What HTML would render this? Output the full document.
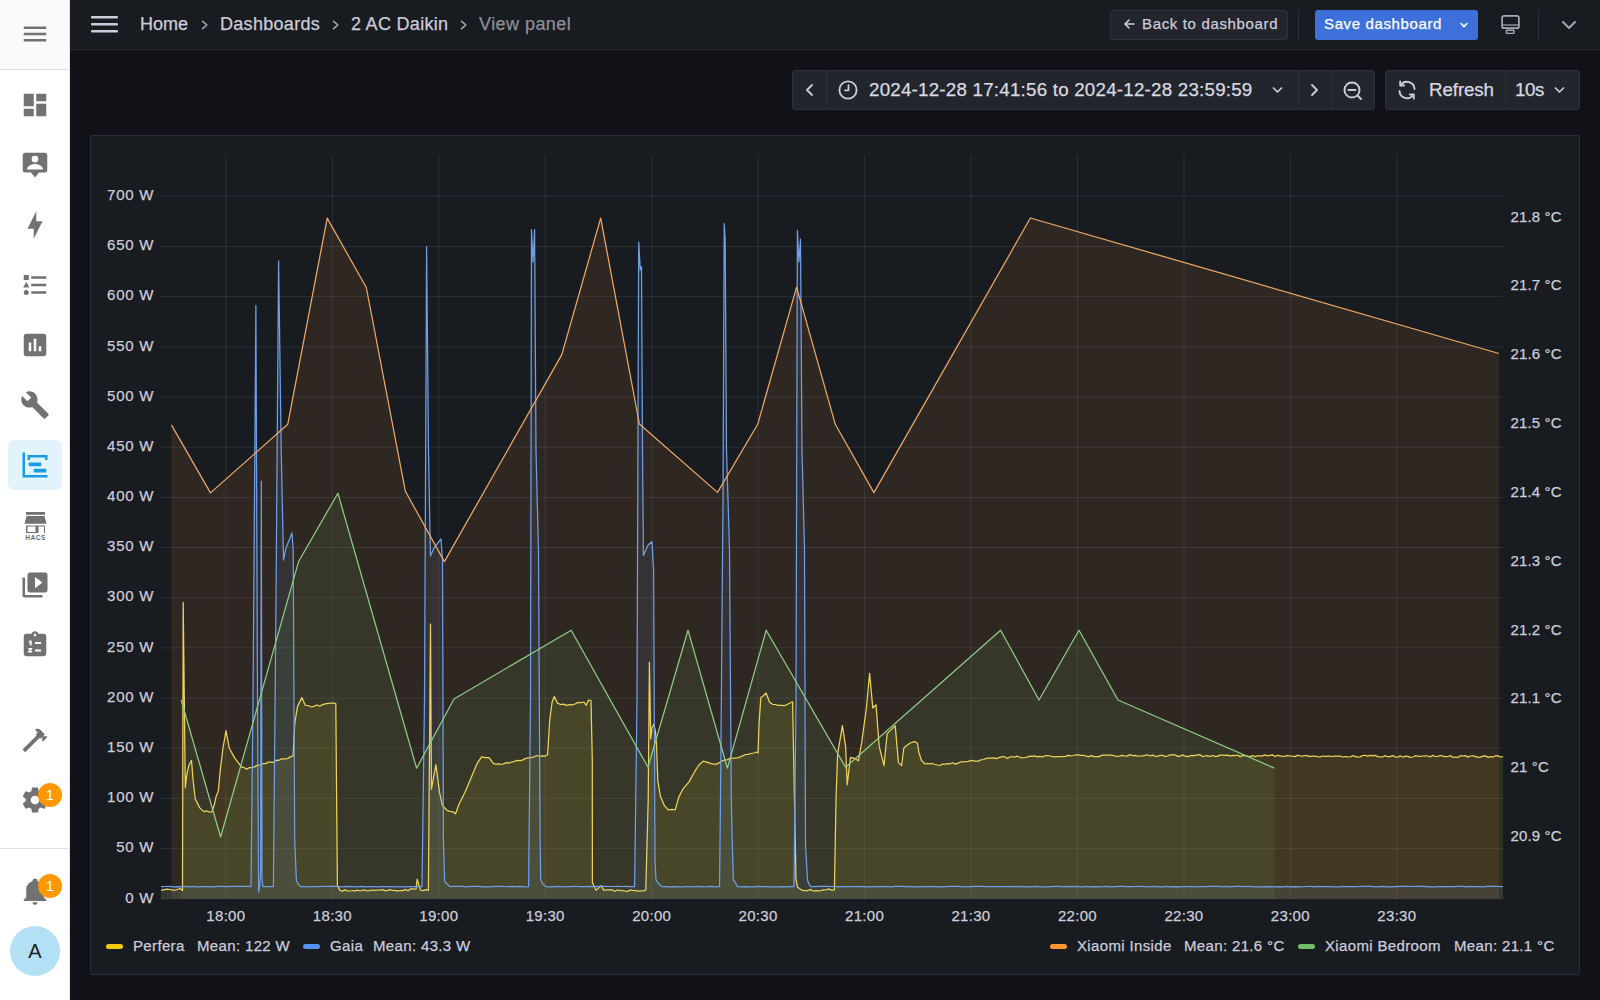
<!DOCTYPE html>
<html><head><meta charset="utf-8">
<style>
*{box-sizing:border-box;margin:0;padding:0}
html,body{width:1600px;height:1000px;overflow:hidden;background:#111217;font-family:"Liberation Sans",sans-serif}
#top div,.ttxt,.yl,.yr,.xl,.lg{-webkit-text-stroke:0.25px currentColor}
#side{position:absolute;left:0;top:0;width:70px;height:1000px;background:#fff;border-right:1px solid #e4e4e4}
#sidehead{position:absolute;left:0;top:0;width:69px;height:70px;background:#fafafa;border-bottom:1px solid #e0e0e0}
.ic{position:absolute;left:20px;width:30px;height:30px}
.ic svg{width:30px;height:30px;display:block}
.ic path{fill:#727272}
#sel{position:absolute;left:8px;top:440px;width:54px;height:50px;border-radius:6px;background:#e3f3fc}
.badge{position:absolute;width:24px;height:24px;border-radius:12px;background:#ff9800;color:#fff;font-size:14px;line-height:24px;text-align:center}
#sep{position:absolute;left:0;top:848px;width:69px;height:1px;background:#e0e0e0}
#avatar{position:absolute;left:10px;top:926px;width:50px;height:50px;border-radius:25px;background:#b3e0f5;color:#212121;font-size:20px;line-height:50px;text-align:center}

#top{position:absolute;left:70px;top:0;width:1530px;height:50px;background:#181b1f;border-bottom:1px solid #2c2e33}
.crumb{position:absolute;top:13px;font-size:18px;color:#ccccdc;white-space:nowrap;line-height:22px}
.chev{position:absolute;top:13px;font-size:16px;color:#9fa0a8;line-height:22px}
.btn{position:absolute;border-radius:3px}

.tb{position:absolute;top:70px;height:40px;background:#22252b;border:1px solid #2f3237}
.tdiv{position:absolute;top:71px;width:1px;height:38px;background:#2c2f35}
.ttxt{position:absolute;top:79px;font-size:18.75px;line-height:22px;color:#d8d9e3;white-space:nowrap}
#panel{position:absolute;left:90px;top:135px;width:1490px;height:840px;background:#181b1f;border:1px solid #2a2d33;border-radius:2px}
.yl{position:absolute;left:70px;width:84.2px;text-align:right;font-size:15px;line-height:18px;color:#ccccdc;letter-spacing:0.75px;white-space:nowrap}
.yr{position:absolute;left:1510.5px;font-size:15px;line-height:18px;color:#ccccdc;letter-spacing:0.15px;white-space:nowrap}
.xl{position:absolute;top:907px;width:60px;text-align:center;font-size:15px;line-height:18px;color:#ccccdc;letter-spacing:0.3px}
.lg{position:absolute;top:937px;font-size:15px;line-height:18px;color:#ccccdc;white-space:nowrap;letter-spacing:0.35px}
.ld{position:absolute;top:944px;width:17px;height:5px;border-radius:3px}
</style></head><body>
<div id="side">
  <div id="sidehead">
    <div class="ic" style="top:19px"><svg viewBox="0 0 24 24"><path d="M3,6H21V8H3V6M3,11H21V13H3V11M3,16H21V18H3V16Z"/></svg></div>
  </div>
  <div id="sel"></div>
  <div class="ic" style="top:89.5px"><svg viewBox="0 0 24 24"><path d="M13,3V9H21V3M13,21H21V11H13M3,21H11V15H3M3,13H11V3H3V13Z"/></svg></div>
  <div class="ic" style="top:149.5px"><svg viewBox="0 0 24 24"><path fill-rule="evenodd" d="M4.2 2.2H19.8A2 2 0 0 1 21.8 4.2V16A2 2 0 0 1 19.8 18H15.2L12 22L8.8 18H4.2A2 2 0 0 1 2.2 16V4.2A2 2 0 0 1 4.2 2.2Z M12 4.5A2.7 2.7 0 1 0 12 9.9A2.7 2.7 0 1 0 12 4.5Z M5.6 15.6H18.4C18.4 13 15 11.2 12 11.2S5.6 13 5.6 15.6Z"/></svg></div>
  <div class="ic" style="top:209.5px"><svg viewBox="0 0 24 24"><path d="M11 15H6L13 1V9H18L11 23V15Z"/></svg></div>
  <div class="ic" style="top:269.5px"><svg viewBox="0 0 24 24"><path d="M5,9.5L7.5,14H2.5L5,9.5M3,4H7V8H3V4M5,20A2,2 0 0,0 7,18A2,2 0 0,0 5,16A2,2 0 0,0 3,18A2,2 0 0,0 5,20M9,5V7H21V5H9M9,19H21V17H9V19M9,13H21V11H9V13Z"/></svg></div>
  <div class="ic" style="top:329.5px"><svg viewBox="0 0 24 24"><path d="M9 17H7V10H9V17M13 17H11V7H13V17M17 17H15V13H17V17M19 3H5C3.9 3 3 3.9 3 5V19C3 20.1 3.9 21 5 21H19C20.1 21 21 20.1 21 19V5C21 3.9 20.1 3 19 3Z" fill-rule="evenodd"/></svg></div>
  <div class="ic" style="top:389.5px"><svg viewBox="0 0 24 24"><path d="M22.7,19L13.6,9.9C14.5,7.6 14,4.9 12.1,3C10.1,1 7.1,0.6 4.7,1.7L9,6L6,9L1.6,4.7C0.4,7.1 0.9,10.1 2.9,12.1C4.8,14 7.5,14.5 9.8,13.6L18.9,22.7C19.3,23.1 19.9,23.1 20.3,22.7L22.6,20.4C23.1,20 23.1,19.3 22.7,19Z"/></svg></div>
  <div class="ic" style="top:449.5px"><svg viewBox="0 0 24 24"><path style="fill:#1a9be6" d="M2,2H4V20H22V22H2V2M7,10H17V13H7V10M11,15H21V18H11V15M6,4H22V8H20V6H8V8H6V4Z"/></svg></div>
  <svg style="position:absolute;left:15px;top:500px" width="40" height="50" viewBox="0 0 40 50"><g fill="#727272"><rect x="11" y="12" width="19" height="2.8"/><path d="M11.5 16H29.5L31.5 23.8H9.5Z"/><path d="M11 25.5H30V33H29V26.5H23.5V33H20.5V26.5H12.5V32H20.5V33H11Z"/></g><text x="20.5" y="40.2" font-size="6.6" font-weight="bold" text-anchor="middle" fill="#6a6a6a" font-family="Liberation Sans" letter-spacing="0.5">HACS</text></svg>
  <div class="ic" style="top:569.5px"><svg viewBox="0 0 24 24"><path d="M4,6H2V20A2,2 0 0,0 4,22H18V20H4V6M20,2H8A2,2 0 0,0 6,4V16A2,2 0 0,0 8,18H20A2,2 0 0,0 22,16V4A2,2 0 0,0 20,2M12,14.5V5.5L18,10L12,14.5Z"/></svg></div>
  <div class="ic" style="top:629.5px"><svg viewBox="0 0 24 24"><path d="M19 3H14.82C14.4 1.84 13.3 1 12 1S9.6 1.84 9.18 3H5C3.9 3 3 3.9 3 5V19C3 20.1 3.9 21 5 21H19C20.1 21 21 20.1 21 19V5C21 3.9 20.1 3 19 3M12 3C12.55 3 13 3.45 13 4S12.55 5 12 5 11 4.55 11 4 11.45 3 12 3M12 9.6H16.8V11.2H12Z M12 15.6H16.8V17.2H12Z M7.8 8.4H9.3V12.2H7.8V9.8L7 10.2V9.1Z M6.6 14.4H9.7V15.6L8.2 16.8H9.8V18H6.4V16.9L8 15.6H6.6Z" fill-rule="evenodd"/></svg></div>
  <div class="ic" style="top:724.5px"><svg viewBox="0 0 24 24"><path d="M2 19.63L13.43 8.2L12.72 7.5L14.14 6.07L12 3.89C13.2 2.7 15.09 2.7 16.27 3.89L19.87 7.5L18.45 8.91H21.29L22 9.62L18.45 13.21L17.74 12.5V9.62L16.27 11.04L15.56 10.33L4.13 21.76L2 19.63Z"/></svg></div>
  <div class="ic" style="top:784.5px"><svg viewBox="0 0 24 24"><path d="M12,15.5A3.5,3.5 0 0,1 8.5,12A3.5,3.5 0 0,1 12,8.5A3.5,3.5 0 0,1 15.5,12A3.5,3.5 0 0,1 12,15.5M19.43,12.97C19.47,12.650 19.5,12.33 19.5,12C19.5,11.67 19.47,11.34 19.43,11L21.54,9.37C21.73,9.22 21.78,8.95 21.66,8.73L19.66,5.27C19.54,5.05 19.27,4.96 19.05,5.05L16.56,6.05C16.04,5.66 15.5,5.32 14.87,5.07L14.5,2.42C14.46,2.18 14.25,2 14,2H10C9.75,2 9.54,2.18 9.5,2.42L9.130,5.07C8.5,5.32 7.96,5.66 7.44,6.05L4.95,5.05C4.73,4.96 4.46,5.05 4.34,5.27L2.34,8.73C2.21,8.95 2.27,9.22 2.46,9.37L4.57,11C4.53,11.34 4.5,11.67 4.5,12C4.5,12.33 4.53,12.65 4.57,12.97L2.46,14.63C2.27,14.78 2.21,15.05 2.34,15.27L4.34,18.73C4.46,18.95 4.73,19.03 4.95,18.95L7.44,17.94C7.96,18.34 8.5,18.68 9.13,18.93L9.5,21.58C9.54,21.82 9.75,22 10,22H14C14.25,22 14.46,21.82 14.5,21.58L14.87,18.93C15.5,18.67 16.04,18.34 16.56,17.94L19.05,18.95C19.27,19.03 19.54,18.95 19.66,18.73L21.66,15.27C21.78,15.05 21.73,14.78 21.54,14.63L19.43,12.97Z"/></svg></div>
  <div class="badge" style="left:38px;top:783px">1</div>
  <div id="sep"></div>
  <div class="ic" style="top:875.5px"><svg viewBox="0 0 24 24"><path d="M21,19V20H3V19L5,17V11C5,7.9 7.03,5.170 10,4.29C10,4.19 10,4.1 10,4A2,2 0 0,1 12,2A2,2 0 0,1 14,4C14,4.1 14,4.19 14,4.29C16.97,5.17 19,7.9 19,11V17L21,19M14,21A2,2 0 0,1 12,23A2,2 0 0,1 10,21"/></svg></div>
  <div class="badge" style="left:38px;top:874px">1</div>
  <div id="avatar">A</div>
</div>

<div id="top">
  <svg style="position:absolute;left:21px;top:14px" width="27" height="20" viewBox="0 0 27 20"><rect x="0" y="2" width="27" height="2.4" rx="1" fill="#ccccdc"/><rect x="0" y="9" width="27" height="2.4" rx="1" fill="#ccccdc"/><rect x="0" y="16" width="27" height="2.4" rx="1" fill="#ccccdc"/></svg>
  <div class="crumb" style="left:70px">Home</div>
  <svg style="position:absolute;left:130px;top:19px" width="10" height="12" viewBox="0 0 10 12"><path d="M2.6 2.3L6.9 6L2.6 9.7" stroke="#a3a4ac" stroke-width="1.6" fill="none" stroke-linecap="round" stroke-linejoin="round"/></svg>
  <div class="crumb" style="left:150px;letter-spacing:0.3px">Dashboards</div>
  <svg style="position:absolute;left:261px;top:19px" width="10" height="12" viewBox="0 0 10 12"><path d="M2.6 2.3L6.9 6L2.6 9.7" stroke="#a3a4ac" stroke-width="1.6" fill="none" stroke-linecap="round" stroke-linejoin="round"/></svg>
  <div class="crumb" style="left:281px;letter-spacing:0.3px">2 AC Daikin</div>
  <svg style="position:absolute;left:389px;top:19px" width="10" height="12" viewBox="0 0 10 12"><path d="M2.6 2.3L6.9 6L2.6 9.7" stroke="#a3a4ac" stroke-width="1.6" fill="none" stroke-linecap="round" stroke-linejoin="round"/></svg>
  <div class="crumb" style="left:409px;color:#8e8e98;letter-spacing:0.45px">View panel</div>

  <div class="btn" style="left:1040px;top:10px;width:178px;height:30px;background:#22252b;border:1px solid #2f3237"></div>
  <svg style="position:absolute;left:1052px;top:17px" width="14" height="14" viewBox="0 0 14 14"><path d="M12 7H3M7 3L3 7L7 11" stroke="#ccccdc" stroke-width="1.6" fill="none" stroke-linecap="round" stroke-linejoin="round"/></svg>
  <div style="position:absolute;left:1072px;top:15px;font-size:15px;line-height:18px;color:#ccccdc;letter-spacing:0.65px;white-space:nowrap">Back to dashboard</div>
  <div style="position:absolute;left:1228px;top:10px;width:1px;height:30px;background:#2c2f35"></div>
  <div class="btn" style="left:1245px;top:10px;width:163px;height:30px;background:#3d71d9"></div>
  <div style="position:absolute;left:1254px;top:15px;font-size:15px;line-height:18px;color:#fff;letter-spacing:0.63px;white-space:nowrap">Save dashboard</div>
  <svg style="position:absolute;left:1388px;top:19px" width="12" height="12" viewBox="0 0 12 12"><path d="M3 4.5L6 7.5L9 4.5" stroke="#fff" stroke-width="1.6" fill="none" stroke-linecap="round"/></svg>
  <svg style="position:absolute;left:1429px;top:13px" width="24" height="24" viewBox="0 0 24 24"><rect x="3.1" y="2.95" width="16.8" height="12.2" rx="2" stroke="#a9aab3" stroke-width="1.7" fill="none"/><path d="M3.1 12H19.9" stroke="#a9aab3" stroke-width="1.2"/><rect x="7.4" y="17.2" width="7.6" height="3.2" rx="0.6" stroke="#a9aab3" stroke-width="1.4" fill="none"/></svg>
  <div style="position:absolute;left:1468px;top:10px;width:1px;height:30px;background:#2c2f35"></div>
  <svg style="position:absolute;left:1490px;top:17px" width="18" height="16" viewBox="0 0 18 16"><path d="M3 5L9 11L15 5" stroke="#a5a6ae" stroke-width="2" fill="none" stroke-linecap="round" stroke-linejoin="round"/></svg>
</div>


<div class="tb" style="left:792px;width:583px;border-radius:3px"></div>
<div class="tdiv" style="left:826px"></div>
<div class="tdiv" style="left:1298px"></div>
<div class="tdiv" style="left:1331px"></div>
<svg style="position:absolute;left:802px;top:82px" width="16" height="16" viewBox="0 0 16 16"><path d="M10 3L5 8L10 13" stroke="#ccccdc" stroke-width="1.8" fill="none" stroke-linecap="round" stroke-linejoin="round"/></svg>
<svg style="position:absolute;left:837px;top:79px" width="22" height="22" viewBox="0 0 22 22"><circle cx="11" cy="11" r="8.6" stroke="#ccccdc" stroke-width="1.8" fill="none"/><path d="M11.5 6.2V11.3H8" stroke="#ccccdc" stroke-width="1.8" fill="none" stroke-linecap="round" stroke-linejoin="round"/></svg>
<div class="ttxt" style="left:869px;letter-spacing:0.22px">2024-12-28 17:41:56 to 2024-12-28 23:59:59</div>
<svg style="position:absolute;left:1270px;top:83px" width="15" height="14" viewBox="0 0 15 14"><path d="M3.5 5L7.5 9L11.5 5" stroke="#ccccdc" stroke-width="1.7" fill="none" stroke-linecap="round" stroke-linejoin="round"/></svg>
<svg style="position:absolute;left:1306px;top:82px" width="16" height="16" viewBox="0 0 16 16"><path d="M6 3L11 8L6 13" stroke="#ccccdc" stroke-width="1.8" fill="none" stroke-linecap="round" stroke-linejoin="round"/></svg>
<svg style="position:absolute;left:1341px;top:78.6px" width="24" height="24" viewBox="0 0 24 24"><circle cx="11" cy="11" r="7.5" stroke="#ccccdc" stroke-width="1.9" fill="none"/><path d="M7.5 11H14.5M16.5 16.5L20 20" stroke="#ccccdc" stroke-width="1.9" stroke-linecap="round"/></svg>

<div class="tb" style="left:1385px;width:195px;border-radius:3px"></div>
<div class="tdiv" style="left:1505px"></div>
<svg style="position:absolute;left:1395px;top:78px" width="24" height="24" viewBox="0 0 24 24"><path d="M19.5 11A7.5 7.5 0 0 0 6 6.8M4.5 13A7.5 7.5 0 0 0 18 17.2" stroke="#ccccdc" stroke-width="1.9" fill="none" stroke-linecap="round"/><path d="M5.2 3.5V7.5H9.2M18.8 20.5V16.5H14.8" stroke="#ccccdc" stroke-width="1.9" fill="none" stroke-linecap="round" stroke-linejoin="round"/></svg>
<div class="ttxt" style="left:1429px;letter-spacing:-0.1px">Refresh</div>
<div class="ttxt" style="left:1515px;letter-spacing:-0.4px">10s</div>
<svg style="position:absolute;left:1552px;top:83px" width="15" height="14" viewBox="0 0 15 14"><path d="M3.5 5L7.5 9L11.5 5" stroke="#ccccdc" stroke-width="1.7" fill="none" stroke-linecap="round" stroke-linejoin="round"/></svg>

<div id="panel"></div>
<svg style="position:absolute;left:0;top:0" width="1600" height="1000" viewBox="0 0 1600 1000">
<g stroke="rgba(204,204,220,0.11)" stroke-width="1"><line x1="160" y1="898.8" x2="1503.5" y2="898.8"/><line x1="160" y1="848.6" x2="1503.5" y2="848.6"/><line x1="160" y1="798.4" x2="1503.5" y2="798.4"/><line x1="160" y1="748.3" x2="1503.5" y2="748.3"/><line x1="160" y1="698.1" x2="1503.5" y2="698.1"/><line x1="160" y1="647.9" x2="1503.5" y2="647.9"/><line x1="160" y1="597.7" x2="1503.5" y2="597.7"/><line x1="160" y1="547.5" x2="1503.5" y2="547.5"/><line x1="160" y1="497.4" x2="1503.5" y2="497.4"/><line x1="160" y1="447.2" x2="1503.5" y2="447.2"/><line x1="160" y1="397.0" x2="1503.5" y2="397.0"/><line x1="160" y1="346.8" x2="1503.5" y2="346.8"/><line x1="160" y1="296.6" x2="1503.5" y2="296.6"/><line x1="160" y1="246.5" x2="1503.5" y2="246.5"/><line x1="160" y1="196.3" x2="1503.5" y2="196.3"/><line x1="225.9" y1="155" x2="225.9" y2="899.8"/><line x1="332.4" y1="155" x2="332.4" y2="899.8"/><line x1="438.8" y1="155" x2="438.8" y2="899.8"/><line x1="545.2" y1="155" x2="545.2" y2="899.8"/><line x1="651.7" y1="155" x2="651.7" y2="899.8"/><line x1="758.1" y1="155" x2="758.1" y2="899.8"/><line x1="864.6" y1="155" x2="864.6" y2="899.8"/><line x1="971.0" y1="155" x2="971.0" y2="899.8"/><line x1="1077.5" y1="155" x2="1077.5" y2="899.8"/><line x1="1184.0" y1="155" x2="1184.0" y2="899.8"/><line x1="1290.4" y1="155" x2="1290.4" y2="899.8"/><line x1="1396.9" y1="155" x2="1396.9" y2="899.8"/></g>
<polygon points="161.0,898.8 161.0,890.4 164.0,889.7 167.0,889.1 170.0,889.5 173.0,890.1 176.0,890.0 180.0,888.5 182.5,890.4 183.2,602.4 185.3,787.8 186.8,774.6 189.0,765.0 191.5,760.3 193.0,779.0 195.2,798.8 199.6,807.6 204.0,811.6 206.6,810.9 209.1,811.9 211.7,812.0 214.0,806.0 216.1,796.6 218.3,791.1 220.5,768.0 223.0,748.0 226.0,730.6 229.3,748.2 234.8,758.1 241.4,766.9 244.2,767.7 246.9,769.1 249.5,767.5 252.0,767.6 254.6,766.9 257.4,765.1 260.1,765.1 262.9,763.6 265.6,763.6 268.2,762.1 270.9,762.1 273.5,762.3 276.2,760.2 278.8,760.3 281.7,758.9 284.5,758.8 287.4,758.6 290.2,756.9 293.1,755.9 294.7,724.0 297.5,706.4 301.9,697.6 305.2,705.3 308.1,705.5 311.1,707.0 314.0,706.4 316.8,705.0 319.7,706.2 322.5,704.6 325.3,703.8 328.1,703.3 331.0,703.2 333.8,703.1 335.8,703.5 337.4,885.6 340.0,890.4 342.5,891.1 345.0,889.9 347.5,890.8 350.0,891.0 352.5,890.5 355.0,890.9 357.5,890.1 360.0,891.0 362.5,890.0 365.0,890.2 367.5,891.0 370.0,890.4 372.5,890.0 375.0,890.4 377.5,890.0 380.0,890.0 382.5,889.7 385.0,890.7 387.5,890.6 390.0,889.7 392.5,890.5 395.0,890.4 397.5,891.2 400.0,890.5 402.7,890.7 405.3,889.6 408.0,890.7 410.7,888.7 413.3,889.1 416.0,889.0 417.2,879.2 420.4,890.0 423.1,890.6 425.7,889.6 428.4,890.4 430.5,624.0 431.4,789.2 435.9,764.6 439.5,792.2 442.5,805.7 447.0,810.2 449.8,811.4 452.7,811.7 455.5,813.8 459.0,804.2 465.0,792.2 472.6,774.2 477.0,763.7 481.6,756.8 485.3,757.6 489.0,757.7 493.6,763.7 496.2,764.2 498.9,763.8 501.5,764.5 504.1,763.7 506.7,762.7 509.4,762.8 512.0,762.0 514.6,761.3 517.2,760.4 519.9,760.6 522.5,760.1 525.1,758.6 528.1,757.9 531.1,757.7 534.1,756.8 536.8,755.5 539.5,756.4 542.2,755.8 544.9,756.1 547.6,754.7 549.7,720.1 552.1,702.0 554.3,696.5 557.6,703.1 560.5,704.5 563.5,704.1 566.4,705.3 569.3,704.6 572.1,704.8 575.0,704.0 578.0,702.4 581.0,702.6 584.0,702.0 586.2,705.3 588.4,700.2 591.0,700.5 592.3,760.0 592.4,882.4 596.2,890.4 601.0,885.6 604.0,890.4 606.6,889.8 609.2,889.8 611.9,889.7 614.5,891.2 617.1,890.0 619.8,890.3 622.4,890.7 625.0,891.0 627.6,891.6 630.2,889.9 632.8,890.5 635.4,890.6 638.0,891.1 640.6,890.9 643.2,890.9 645.8,890.0 648.2,800.0 649.4,662.1 650.7,739.0 652.0,728.0 653.9,723.9 655.5,732.0 656.5,744.2 657.8,780.6 660.4,796.3 664.3,805.4 668.2,809.8 671.7,809.4 675.2,809.8 678.6,797.6 682.5,789.7 689.0,781.9 695.5,770.2 699.0,765.0 703.3,761.1 705.9,761.8 708.5,762.6 711.1,763.7 713.7,764.2 716.4,764.1 719.0,762.9 721.6,761.2 724.2,760.2 726.8,759.8 729.4,758.7 732.0,758.2 734.6,758.2 737.2,757.9 739.8,757.2 742.6,755.9 745.4,754.5 748.2,754.4 751.1,753.5 753.9,753.0 756.7,752.0 758.1,753.0 759.0,725.0 760.8,697.6 763.0,696.0 766.1,693.0 769.6,702.2 772.5,704.3 775.3,704.5 778.4,705.3 781.4,705.3 784.5,705.7 788.0,704.0 792.6,701.8 793.7,760.0 796.0,879.4 797.6,887.2 802.4,890.4 805.1,890.6 807.7,890.7 810.4,889.4 813.1,891.0 815.7,890.7 818.4,890.8 821.1,890.6 823.7,889.8 826.4,889.7 829.1,889.1 831.7,890.1 834.4,889.8 836.0,800.0 837.6,754.4 842.4,725.6 845.6,746.4 847.2,784.8 850.4,757.6 853.1,757.8 855.7,758.9 858.4,760.8 861.6,743.2 866.4,708.0 869.6,673.4 872.8,708.0 876.0,704.8 879.2,746.4 884.0,765.6 887.2,733.6 895.2,725.6 898.4,762.4 901.6,765.6 903.8,748.0 908.0,744.5 911.2,742.5 914.4,741.6 917.4,743.0 918.8,752.0 921.5,760.5 925.0,764.0 927.5,763.4 930.0,763.9 932.5,763.5 935.0,764.5 940.0,765.5 942.6,764.1 945.1,764.1 947.7,763.6 950.3,763.8 952.8,762.7 955.4,764.1 958.0,763.2 960.6,761.9 963.1,761.8 965.7,761.6 968.3,761.3 970.8,760.4 973.4,760.8 976.0,761.2 978.5,761.1 981.1,759.8 983.6,759.5 986.2,758.4 988.8,758.1 991.3,758.2 993.9,757.8 996.4,758.6 999.0,757.6 1001.6,756.8 1004.1,756.5 1006.7,758.3 1009.2,757.3 1011.8,756.5 1014.4,757.2 1016.9,756.1 1019.5,757.0 1022.0,757.8 1024.6,757.5 1027.2,757.1 1029.7,756.2 1032.3,756.3 1034.8,755.8 1037.4,756.9 1040.0,756.4 1042.5,756.8 1045.1,755.8 1047.6,755.5 1050.2,756.0 1052.8,756.6 1055.3,756.9 1057.9,756.7 1060.5,756.5 1063.0,756.5 1065.6,756.4 1068.2,755.3 1070.8,755.9 1073.3,755.5 1075.9,754.9 1078.5,754.9 1081.0,755.3 1083.6,755.3 1086.2,756.1 1088.7,756.6 1091.3,755.6 1093.9,756.6 1096.5,756.6 1099.0,756.6 1101.6,755.4 1104.2,755.1 1106.7,755.1 1109.3,755.0 1111.9,755.0 1114.4,755.8 1117.0,756.3 1119.6,756.2 1122.2,755.4 1124.7,755.8 1127.3,756.1 1129.9,754.6 1132.4,755.7 1135.0,755.4 1137.5,756.2 1140.0,756.0 1142.5,755.9 1145.0,755.4 1147.5,754.8 1150.0,756.0 1152.5,755.1 1155.0,756.1 1157.5,756.4 1160.0,755.3 1162.5,755.3 1165.0,756.4 1167.5,756.0 1170.0,754.9 1172.5,754.8 1175.0,754.8 1177.5,756.4 1180.0,756.2 1182.5,754.9 1185.0,756.2 1187.5,756.6 1190.0,755.9 1192.5,755.3 1195.0,755.7 1197.5,754.9 1200.0,754.7 1202.5,756.6 1205.0,756.0 1207.5,755.7 1210.0,756.5 1212.5,755.5 1215.0,756.4 1217.5,756.4 1220.0,755.1 1222.5,755.2 1225.0,755.3 1227.5,755.2 1230.0,755.9 1232.5,755.3 1235.0,755.6 1237.5,755.0 1240.0,756.6 1242.5,755.5 1245.0,755.7 1247.5,756.0 1250.0,756.6 1252.5,755.7 1255.0,756.7 1257.5,755.8 1260.0,755.9 1262.5,755.9 1265.0,754.9 1267.5,755.8 1270.0,755.3 1272.5,754.9 1275.0,756.5 1277.5,755.3 1280.0,755.9 1282.5,756.4 1285.0,756.1 1287.5,755.6 1290.0,756.0 1292.5,756.1 1295.0,756.6 1297.5,755.2 1300.0,756.0 1302.5,756.1 1305.0,755.5 1307.5,755.6 1310.0,756.6 1312.5,756.1 1315.0,756.2 1317.5,756.6 1320.0,756.9 1322.6,756.0 1325.1,756.3 1327.6,756.1 1330.1,756.1 1332.6,756.5 1335.1,756.0 1337.6,756.2 1340.1,756.1 1342.6,757.0 1345.1,756.5 1347.6,756.9 1350.1,757.0 1352.6,755.7 1355.1,756.3 1357.6,757.1 1360.1,756.9 1362.7,755.5 1365.2,755.4 1367.7,756.1 1370.2,755.4 1372.7,755.7 1375.2,755.4 1377.7,756.6 1380.2,756.8 1382.7,757.0 1385.2,755.6 1387.7,756.7 1390.2,756.6 1392.7,755.6 1395.2,757.0 1397.7,757.2 1400.2,755.7 1402.8,757.2 1405.3,756.1 1407.8,756.3 1410.3,757.3 1412.8,757.0 1415.3,755.7 1417.8,756.2 1420.3,756.4 1422.8,756.0 1425.3,755.8 1427.8,756.0 1430.3,756.8 1432.8,755.4 1435.3,756.5 1437.8,756.3 1440.3,755.5 1442.9,756.1 1445.4,756.7 1447.9,756.5 1450.4,755.6 1452.9,757.4 1455.4,757.0 1457.9,757.4 1460.4,755.7 1462.9,756.0 1465.4,755.6 1467.9,757.1 1470.4,756.0 1472.9,755.8 1475.4,756.4 1477.9,757.3 1480.4,757.2 1483.0,756.1 1485.5,755.8 1488.0,757.4 1490.5,756.7 1493.0,757.0 1495.5,755.8 1498.0,755.7 1500.5,757.0 1503.0,756.6 1503.0,898.8" fill="#FADE2A" fill-opacity="0.1"/>
<polygon points="161.0,898.8 161.0,886.6 165.1,886.5 169.2,886.3 173.3,886.9 177.4,886.7 181.5,886.8 185.5,886.3 189.6,886.8 193.7,886.3 197.8,886.9 201.9,886.6 206.0,886.5 210.1,886.6 214.2,886.9 218.3,886.4 222.4,886.3 226.5,886.6 230.5,886.4 234.6,886.3 238.7,886.4 242.8,886.3 246.9,886.4 251.0,886.6 253.0,700.0 255.9,305.5 257.5,700.0 258.6,892.0 259.8,886.0 260.6,870.0 261.3,481.0 262.0,880.0 263.0,886.6 268.2,886.5 273.4,886.6 276.0,600.0 278.6,260.9 281.2,450.0 283.5,560.0 286.0,548.0 292.0,533.0 293.2,549.5 294.7,840.0 296.4,880.2 298.0,884.0 300.8,886.6 304.8,886.5 308.9,886.8 312.9,886.5 317.0,886.6 321.0,886.4 325.0,886.5 329.1,886.3 333.1,886.4 337.2,886.3 341.2,886.8 345.2,886.6 349.3,886.4 353.3,886.6 357.4,886.9 361.4,886.3 365.4,886.8 369.5,886.6 373.5,886.6 377.6,886.8 381.6,886.5 385.6,886.6 389.7,886.7 393.7,886.9 397.8,886.5 401.8,886.8 405.8,886.7 409.9,886.7 413.9,886.5 418.0,886.5 422.0,886.6 424.5,700.0 426.6,246.6 428.5,450.0 430.4,555.9 434.0,548.0 441.0,538.8 442.5,560.0 443.4,840.0 444.6,880.8 447.0,884.0 450.0,886.6 454.1,886.3 458.3,886.3 462.4,886.3 466.5,886.8 470.7,886.4 474.8,886.4 479.0,886.3 483.1,886.8 487.2,886.9 491.4,886.7 495.5,886.4 499.6,886.4 503.8,886.5 507.9,886.6 512.1,886.4 516.2,886.6 520.3,886.4 524.5,886.9 528.6,886.6 530.5,700.0 531.5,229.5 533.0,262.0 534.6,229.5 536.0,450.0 538.5,551.5 540.1,840.0 540.7,880.0 543.0,884.0 546.0,886.6 550.0,886.9 554.1,886.6 558.1,886.4 562.1,886.9 566.1,886.5 570.2,886.5 574.2,886.3 578.2,886.5 582.2,886.6 586.3,886.6 590.3,886.4 594.3,886.6 598.4,886.3 602.4,886.4 606.4,886.3 610.4,886.5 614.5,886.3 618.5,886.3 622.5,886.5 626.5,886.4 630.6,886.7 634.6,886.6 637.0,700.0 638.7,242.0 640.3,270.0 641.5,266.6 642.5,450.0 643.4,555.4 648.0,545.0 652.0,541.7 653.6,570.0 655.0,860.0 656.0,880.0 659.0,884.0 662.0,886.6 666.1,886.6 670.2,886.8 674.3,886.7 678.4,886.8 682.5,886.9 686.6,886.5 690.8,886.5 694.9,886.9 699.0,886.4 703.1,886.8 707.2,886.7 711.3,886.3 715.4,886.8 719.5,886.6 720.5,800.0 723.0,500.0 724.2,223.6 725.2,240.0 726.5,450.0 729.5,549.0 731.3,800.0 732.3,843.7 733.3,880.0 735.0,882.0 737.5,886.6 741.5,886.9 745.6,886.7 749.6,886.8 753.6,886.8 757.7,886.3 761.7,886.6 765.8,886.6 769.8,886.8 773.8,886.8 777.9,886.8 781.9,886.7 785.9,886.9 790.0,886.7 794.0,886.6 796.0,700.0 797.4,230.3 798.9,262.0 800.5,239.2 802.0,450.0 804.5,549.0 805.5,845.0 807.5,880.0 809.0,884.0 811.0,886.6 815.0,886.7 819.0,886.4 823.0,886.3 827.0,886.3 831.0,886.5 835.0,886.3 839.0,886.8 843.0,886.6 847.0,886.7 851.0,886.7 855.0,886.7 859.0,886.6 863.0,886.3 867.0,886.8 871.0,886.8 875.0,886.6 879.0,886.6 883.0,886.7 887.0,886.3 891.0,886.8 895.0,886.4 899.0,886.3 903.0,886.4 907.0,886.8 911.0,886.4 915.0,886.8 919.0,886.9 923.0,886.6 927.0,886.5 931.0,886.6 935.0,886.7 939.0,886.8 943.0,886.7 947.0,886.7 951.0,886.3 955.0,886.4 959.0,886.4 963.0,886.8 967.0,886.5 971.0,886.6 975.0,886.3 979.0,886.3 983.0,886.4 987.0,886.7 991.0,886.7 995.0,886.7 999.0,886.5 1003.0,886.6 1007.0,886.6 1011.0,886.6 1015.0,886.3 1019.0,886.9 1023.0,886.4 1027.0,886.9 1031.0,886.9 1035.0,886.3 1039.0,886.6 1043.0,886.8 1047.0,886.9 1051.0,886.6 1055.0,886.4 1059.0,886.4 1063.0,886.9 1067.0,886.4 1071.0,886.7 1075.0,886.3 1079.0,886.6 1083.0,886.9 1087.0,886.3 1091.0,886.8 1095.0,886.6 1099.0,886.9 1103.0,886.7 1107.0,886.4 1111.0,886.9 1115.0,886.6 1119.0,886.3 1123.0,886.3 1127.0,886.6 1131.0,886.6 1135.0,886.5 1139.0,886.3 1143.0,886.5 1147.0,886.5 1151.0,886.8 1155.0,886.3 1159.0,886.8 1163.0,886.8 1167.0,886.3 1171.0,886.9 1175.0,886.7 1179.0,886.9 1183.0,886.5 1187.0,886.5 1191.0,886.5 1195.0,886.9 1199.0,886.7 1203.0,886.5 1207.0,886.5 1211.0,886.4 1215.0,886.3 1219.0,886.3 1223.0,886.8 1227.0,886.4 1231.0,886.9 1235.0,886.4 1239.0,886.4 1243.0,886.6 1247.0,886.4 1251.0,886.5 1255.0,886.9 1259.0,886.9 1263.0,886.8 1267.0,886.7 1271.0,886.9 1275.0,886.9 1279.0,886.6 1283.0,886.8 1287.0,886.3 1291.0,886.8 1295.0,886.6 1299.0,886.8 1303.0,886.7 1307.0,886.5 1311.0,886.3 1315.0,886.9 1319.0,886.3 1323.0,886.6 1327.0,886.5 1331.0,886.5 1335.0,886.8 1339.0,886.9 1343.0,886.4 1347.0,886.7 1351.0,886.5 1355.0,886.6 1359.0,886.5 1363.0,886.4 1367.0,886.4 1371.0,886.4 1375.0,886.9 1379.0,886.6 1383.0,886.4 1387.0,886.9 1391.0,886.9 1395.0,886.6 1399.0,886.3 1403.0,886.4 1407.0,886.3 1411.0,886.5 1415.0,886.3 1419.0,886.4 1423.0,886.4 1427.0,886.6 1431.0,886.9 1435.0,886.8 1439.0,886.5 1443.0,886.5 1447.0,886.6 1451.0,886.5 1455.0,886.5 1459.0,886.3 1463.0,886.4 1467.0,886.9 1471.0,886.3 1475.0,886.6 1479.0,886.7 1483.0,886.9 1487.0,886.4 1491.0,886.4 1495.0,886.4 1499.0,886.5 1503.0,886.6 1503.0,898.8" fill="#5794F2" fill-opacity="0.1"/>
<polygon points="171.4,898.8 171.4,424.9 210.5,492.9 287.8,424.2 327.2,218.1 366.3,287.5 405.4,491.3 444.4,561.6 561.8,354.6 600.7,218.1 639.4,424.0 717.5,492.4 757.7,424.3 796.6,287.1 835.3,424.3 873.9,492.6 1030.4,218.0 1499.0,353.5 1499.0,898.8" fill="#FF9846" fill-opacity="0.1"/>
<polygon points="181.2,898.8 181.2,700.0 220.6,837.0 298.5,561.8 337.9,493.2 416.6,768.2 454.0,699.0 571.2,630.2 648.0,767.2 688.0,630.2 727.4,768.2 766.2,630.2 845.6,767.2 1000.6,630.2 1039.0,700.0 1079.0,630.2 1118.0,700.0 1274.6,768.2 1274.6,898.8" fill="#73BF69" fill-opacity="0.1"/>
<polyline points="161.0,890.4 164.0,889.7 167.0,889.1 170.0,889.5 173.0,890.1 176.0,890.0 180.0,888.5 182.5,890.4 183.2,602.4 185.3,787.8 186.8,774.6 189.0,765.0 191.5,760.3 193.0,779.0 195.2,798.8 199.6,807.6 204.0,811.6 206.6,810.9 209.1,811.9 211.7,812.0 214.0,806.0 216.1,796.6 218.3,791.1 220.5,768.0 223.0,748.0 226.0,730.6 229.3,748.2 234.8,758.1 241.4,766.9 244.2,767.7 246.9,769.1 249.5,767.5 252.0,767.6 254.6,766.9 257.4,765.1 260.1,765.1 262.9,763.6 265.6,763.6 268.2,762.1 270.9,762.1 273.5,762.3 276.2,760.2 278.8,760.3 281.7,758.9 284.5,758.8 287.4,758.6 290.2,756.9 293.1,755.9 294.7,724.0 297.5,706.4 301.9,697.6 305.2,705.3 308.1,705.5 311.1,707.0 314.0,706.4 316.8,705.0 319.7,706.2 322.5,704.6 325.3,703.8 328.1,703.3 331.0,703.2 333.8,703.1 335.8,703.5 337.4,885.6 340.0,890.4 342.5,891.1 345.0,889.9 347.5,890.8 350.0,891.0 352.5,890.5 355.0,890.9 357.5,890.1 360.0,891.0 362.5,890.0 365.0,890.2 367.5,891.0 370.0,890.4 372.5,890.0 375.0,890.4 377.5,890.0 380.0,890.0 382.5,889.7 385.0,890.7 387.5,890.6 390.0,889.7 392.5,890.5 395.0,890.4 397.5,891.2 400.0,890.5 402.7,890.7 405.3,889.6 408.0,890.7 410.7,888.7 413.3,889.1 416.0,889.0 417.2,879.2 420.4,890.0 423.1,890.6 425.7,889.6 428.4,890.4 430.5,624.0 431.4,789.2 435.9,764.6 439.5,792.2 442.5,805.7 447.0,810.2 449.8,811.4 452.7,811.7 455.5,813.8 459.0,804.2 465.0,792.2 472.6,774.2 477.0,763.7 481.6,756.8 485.3,757.6 489.0,757.7 493.6,763.7 496.2,764.2 498.9,763.8 501.5,764.5 504.1,763.7 506.7,762.7 509.4,762.8 512.0,762.0 514.6,761.3 517.2,760.4 519.9,760.6 522.5,760.1 525.1,758.6 528.1,757.9 531.1,757.7 534.1,756.8 536.8,755.5 539.5,756.4 542.2,755.8 544.9,756.1 547.6,754.7 549.7,720.1 552.1,702.0 554.3,696.5 557.6,703.1 560.5,704.5 563.5,704.1 566.4,705.3 569.3,704.6 572.1,704.8 575.0,704.0 578.0,702.4 581.0,702.6 584.0,702.0 586.2,705.3 588.4,700.2 591.0,700.5 592.3,760.0 592.4,882.4 596.2,890.4 601.0,885.6 604.0,890.4 606.6,889.8 609.2,889.8 611.9,889.7 614.5,891.2 617.1,890.0 619.8,890.3 622.4,890.7 625.0,891.0 627.6,891.6 630.2,889.9 632.8,890.5 635.4,890.6 638.0,891.1 640.6,890.9 643.2,890.9 645.8,890.0 648.2,800.0 649.4,662.1 650.7,739.0 652.0,728.0 653.9,723.9 655.5,732.0 656.5,744.2 657.8,780.6 660.4,796.3 664.3,805.4 668.2,809.8 671.7,809.4 675.2,809.8 678.6,797.6 682.5,789.7 689.0,781.9 695.5,770.2 699.0,765.0 703.3,761.1 705.9,761.8 708.5,762.6 711.1,763.7 713.7,764.2 716.4,764.1 719.0,762.9 721.6,761.2 724.2,760.2 726.8,759.8 729.4,758.7 732.0,758.2 734.6,758.2 737.2,757.9 739.8,757.2 742.6,755.9 745.4,754.5 748.2,754.4 751.1,753.5 753.9,753.0 756.7,752.0 758.1,753.0 759.0,725.0 760.8,697.6 763.0,696.0 766.1,693.0 769.6,702.2 772.5,704.3 775.3,704.5 778.4,705.3 781.4,705.3 784.5,705.7 788.0,704.0 792.6,701.8 793.7,760.0 796.0,879.4 797.6,887.2 802.4,890.4 805.1,890.6 807.7,890.7 810.4,889.4 813.1,891.0 815.7,890.7 818.4,890.8 821.1,890.6 823.7,889.8 826.4,889.7 829.1,889.1 831.7,890.1 834.4,889.8 836.0,800.0 837.6,754.4 842.4,725.6 845.6,746.4 847.2,784.8 850.4,757.6 853.1,757.8 855.7,758.9 858.4,760.8 861.6,743.2 866.4,708.0 869.6,673.4 872.8,708.0 876.0,704.8 879.2,746.4 884.0,765.6 887.2,733.6 895.2,725.6 898.4,762.4 901.6,765.6 903.8,748.0 908.0,744.5 911.2,742.5 914.4,741.6 917.4,743.0 918.8,752.0 921.5,760.5 925.0,764.0 927.5,763.4 930.0,763.9 932.5,763.5 935.0,764.5 940.0,765.5 942.6,764.1 945.1,764.1 947.7,763.6 950.3,763.8 952.8,762.7 955.4,764.1 958.0,763.2 960.6,761.9 963.1,761.8 965.7,761.6 968.3,761.3 970.8,760.4 973.4,760.8 976.0,761.2 978.5,761.1 981.1,759.8 983.6,759.5 986.2,758.4 988.8,758.1 991.3,758.2 993.9,757.8 996.4,758.6 999.0,757.6 1001.6,756.8 1004.1,756.5 1006.7,758.3 1009.2,757.3 1011.8,756.5 1014.4,757.2 1016.9,756.1 1019.5,757.0 1022.0,757.8 1024.6,757.5 1027.2,757.1 1029.7,756.2 1032.3,756.3 1034.8,755.8 1037.4,756.9 1040.0,756.4 1042.5,756.8 1045.1,755.8 1047.6,755.5 1050.2,756.0 1052.8,756.6 1055.3,756.9 1057.9,756.7 1060.5,756.5 1063.0,756.5 1065.6,756.4 1068.2,755.3 1070.8,755.9 1073.3,755.5 1075.9,754.9 1078.5,754.9 1081.0,755.3 1083.6,755.3 1086.2,756.1 1088.7,756.6 1091.3,755.6 1093.9,756.6 1096.5,756.6 1099.0,756.6 1101.6,755.4 1104.2,755.1 1106.7,755.1 1109.3,755.0 1111.9,755.0 1114.4,755.8 1117.0,756.3 1119.6,756.2 1122.2,755.4 1124.7,755.8 1127.3,756.1 1129.9,754.6 1132.4,755.7 1135.0,755.4 1137.5,756.2 1140.0,756.0 1142.5,755.9 1145.0,755.4 1147.5,754.8 1150.0,756.0 1152.5,755.1 1155.0,756.1 1157.5,756.4 1160.0,755.3 1162.5,755.3 1165.0,756.4 1167.5,756.0 1170.0,754.9 1172.5,754.8 1175.0,754.8 1177.5,756.4 1180.0,756.2 1182.5,754.9 1185.0,756.2 1187.5,756.6 1190.0,755.9 1192.5,755.3 1195.0,755.7 1197.5,754.9 1200.0,754.7 1202.5,756.6 1205.0,756.0 1207.5,755.7 1210.0,756.5 1212.5,755.5 1215.0,756.4 1217.5,756.4 1220.0,755.1 1222.5,755.2 1225.0,755.3 1227.5,755.2 1230.0,755.9 1232.5,755.3 1235.0,755.6 1237.5,755.0 1240.0,756.6 1242.5,755.5 1245.0,755.7 1247.5,756.0 1250.0,756.6 1252.5,755.7 1255.0,756.7 1257.5,755.8 1260.0,755.9 1262.5,755.9 1265.0,754.9 1267.5,755.8 1270.0,755.3 1272.5,754.9 1275.0,756.5 1277.5,755.3 1280.0,755.9 1282.5,756.4 1285.0,756.1 1287.5,755.6 1290.0,756.0 1292.5,756.1 1295.0,756.6 1297.5,755.2 1300.0,756.0 1302.5,756.1 1305.0,755.5 1307.5,755.6 1310.0,756.6 1312.5,756.1 1315.0,756.2 1317.5,756.6 1320.0,756.9 1322.6,756.0 1325.1,756.3 1327.6,756.1 1330.1,756.1 1332.6,756.5 1335.1,756.0 1337.6,756.2 1340.1,756.1 1342.6,757.0 1345.1,756.5 1347.6,756.9 1350.1,757.0 1352.6,755.7 1355.1,756.3 1357.6,757.1 1360.1,756.9 1362.7,755.5 1365.2,755.4 1367.7,756.1 1370.2,755.4 1372.7,755.7 1375.2,755.4 1377.7,756.6 1380.2,756.8 1382.7,757.0 1385.2,755.6 1387.7,756.7 1390.2,756.6 1392.7,755.6 1395.2,757.0 1397.7,757.2 1400.2,755.7 1402.8,757.2 1405.3,756.1 1407.8,756.3 1410.3,757.3 1412.8,757.0 1415.3,755.7 1417.8,756.2 1420.3,756.4 1422.8,756.0 1425.3,755.8 1427.8,756.0 1430.3,756.8 1432.8,755.4 1435.3,756.5 1437.8,756.3 1440.3,755.5 1442.9,756.1 1445.4,756.7 1447.9,756.5 1450.4,755.6 1452.9,757.4 1455.4,757.0 1457.9,757.4 1460.4,755.7 1462.9,756.0 1465.4,755.6 1467.9,757.1 1470.4,756.0 1472.9,755.8 1475.4,756.4 1477.9,757.3 1480.4,757.2 1483.0,756.1 1485.5,755.8 1488.0,757.4 1490.5,756.7 1493.0,757.0 1495.5,755.8 1498.0,755.7 1500.5,757.0 1503.0,756.6" fill="none" stroke="#ecd35c" stroke-width="1.25" stroke-linejoin="round"/>
<polyline points="161.0,886.6 165.1,886.5 169.2,886.3 173.3,886.9 177.4,886.7 181.5,886.8 185.5,886.3 189.6,886.8 193.7,886.3 197.8,886.9 201.9,886.6 206.0,886.5 210.1,886.6 214.2,886.9 218.3,886.4 222.4,886.3 226.5,886.6 230.5,886.4 234.6,886.3 238.7,886.4 242.8,886.3 246.9,886.4 251.0,886.6 253.0,700.0 255.9,305.5 257.5,700.0 258.6,892.0 259.8,886.0 260.6,870.0 261.3,481.0 262.0,880.0 263.0,886.6 268.2,886.5 273.4,886.6 276.0,600.0 278.6,260.9 281.2,450.0 283.5,560.0 286.0,548.0 292.0,533.0 293.2,549.5 294.7,840.0 296.4,880.2 298.0,884.0 300.8,886.6 304.8,886.5 308.9,886.8 312.9,886.5 317.0,886.6 321.0,886.4 325.0,886.5 329.1,886.3 333.1,886.4 337.2,886.3 341.2,886.8 345.2,886.6 349.3,886.4 353.3,886.6 357.4,886.9 361.4,886.3 365.4,886.8 369.5,886.6 373.5,886.6 377.6,886.8 381.6,886.5 385.6,886.6 389.7,886.7 393.7,886.9 397.8,886.5 401.8,886.8 405.8,886.7 409.9,886.7 413.9,886.5 418.0,886.5 422.0,886.6 424.5,700.0 426.6,246.6 428.5,450.0 430.4,555.9 434.0,548.0 441.0,538.8 442.5,560.0 443.4,840.0 444.6,880.8 447.0,884.0 450.0,886.6 454.1,886.3 458.3,886.3 462.4,886.3 466.5,886.8 470.7,886.4 474.8,886.4 479.0,886.3 483.1,886.8 487.2,886.9 491.4,886.7 495.5,886.4 499.6,886.4 503.8,886.5 507.9,886.6 512.1,886.4 516.2,886.6 520.3,886.4 524.5,886.9 528.6,886.6 530.5,700.0 531.5,229.5 533.0,262.0 534.6,229.5 536.0,450.0 538.5,551.5 540.1,840.0 540.7,880.0 543.0,884.0 546.0,886.6 550.0,886.9 554.1,886.6 558.1,886.4 562.1,886.9 566.1,886.5 570.2,886.5 574.2,886.3 578.2,886.5 582.2,886.6 586.3,886.6 590.3,886.4 594.3,886.6 598.4,886.3 602.4,886.4 606.4,886.3 610.4,886.5 614.5,886.3 618.5,886.3 622.5,886.5 626.5,886.4 630.6,886.7 634.6,886.6 637.0,700.0 638.7,242.0 640.3,270.0 641.5,266.6 642.5,450.0 643.4,555.4 648.0,545.0 652.0,541.7 653.6,570.0 655.0,860.0 656.0,880.0 659.0,884.0 662.0,886.6 666.1,886.6 670.2,886.8 674.3,886.7 678.4,886.8 682.5,886.9 686.6,886.5 690.8,886.5 694.9,886.9 699.0,886.4 703.1,886.8 707.2,886.7 711.3,886.3 715.4,886.8 719.5,886.6 720.5,800.0 723.0,500.0 724.2,223.6 725.2,240.0 726.5,450.0 729.5,549.0 731.3,800.0 732.3,843.7 733.3,880.0 735.0,882.0 737.5,886.6 741.5,886.9 745.6,886.7 749.6,886.8 753.6,886.8 757.7,886.3 761.7,886.6 765.8,886.6 769.8,886.8 773.8,886.8 777.9,886.8 781.9,886.7 785.9,886.9 790.0,886.7 794.0,886.6 796.0,700.0 797.4,230.3 798.9,262.0 800.5,239.2 802.0,450.0 804.5,549.0 805.5,845.0 807.5,880.0 809.0,884.0 811.0,886.6 815.0,886.7 819.0,886.4 823.0,886.3 827.0,886.3 831.0,886.5 835.0,886.3 839.0,886.8 843.0,886.6 847.0,886.7 851.0,886.7 855.0,886.7 859.0,886.6 863.0,886.3 867.0,886.8 871.0,886.8 875.0,886.6 879.0,886.6 883.0,886.7 887.0,886.3 891.0,886.8 895.0,886.4 899.0,886.3 903.0,886.4 907.0,886.8 911.0,886.4 915.0,886.8 919.0,886.9 923.0,886.6 927.0,886.5 931.0,886.6 935.0,886.7 939.0,886.8 943.0,886.7 947.0,886.7 951.0,886.3 955.0,886.4 959.0,886.4 963.0,886.8 967.0,886.5 971.0,886.6 975.0,886.3 979.0,886.3 983.0,886.4 987.0,886.7 991.0,886.7 995.0,886.7 999.0,886.5 1003.0,886.6 1007.0,886.6 1011.0,886.6 1015.0,886.3 1019.0,886.9 1023.0,886.4 1027.0,886.9 1031.0,886.9 1035.0,886.3 1039.0,886.6 1043.0,886.8 1047.0,886.9 1051.0,886.6 1055.0,886.4 1059.0,886.4 1063.0,886.9 1067.0,886.4 1071.0,886.7 1075.0,886.3 1079.0,886.6 1083.0,886.9 1087.0,886.3 1091.0,886.8 1095.0,886.6 1099.0,886.9 1103.0,886.7 1107.0,886.4 1111.0,886.9 1115.0,886.6 1119.0,886.3 1123.0,886.3 1127.0,886.6 1131.0,886.6 1135.0,886.5 1139.0,886.3 1143.0,886.5 1147.0,886.5 1151.0,886.8 1155.0,886.3 1159.0,886.8 1163.0,886.8 1167.0,886.3 1171.0,886.9 1175.0,886.7 1179.0,886.9 1183.0,886.5 1187.0,886.5 1191.0,886.5 1195.0,886.9 1199.0,886.7 1203.0,886.5 1207.0,886.5 1211.0,886.4 1215.0,886.3 1219.0,886.3 1223.0,886.8 1227.0,886.4 1231.0,886.9 1235.0,886.4 1239.0,886.4 1243.0,886.6 1247.0,886.4 1251.0,886.5 1255.0,886.9 1259.0,886.9 1263.0,886.8 1267.0,886.7 1271.0,886.9 1275.0,886.9 1279.0,886.6 1283.0,886.8 1287.0,886.3 1291.0,886.8 1295.0,886.6 1299.0,886.8 1303.0,886.7 1307.0,886.5 1311.0,886.3 1315.0,886.9 1319.0,886.3 1323.0,886.6 1327.0,886.5 1331.0,886.5 1335.0,886.8 1339.0,886.9 1343.0,886.4 1347.0,886.7 1351.0,886.5 1355.0,886.6 1359.0,886.5 1363.0,886.4 1367.0,886.4 1371.0,886.4 1375.0,886.9 1379.0,886.6 1383.0,886.4 1387.0,886.9 1391.0,886.9 1395.0,886.6 1399.0,886.3 1403.0,886.4 1407.0,886.3 1411.0,886.5 1415.0,886.3 1419.0,886.4 1423.0,886.4 1427.0,886.6 1431.0,886.9 1435.0,886.8 1439.0,886.5 1443.0,886.5 1447.0,886.6 1451.0,886.5 1455.0,886.5 1459.0,886.3 1463.0,886.4 1467.0,886.9 1471.0,886.3 1475.0,886.6 1479.0,886.7 1483.0,886.9 1487.0,886.4 1491.0,886.4 1495.0,886.4 1499.0,886.5 1503.0,886.6" fill="none" stroke="#6f9ee8" stroke-width="1.25" stroke-linejoin="round"/>
<polyline points="171.4,424.9 210.5,492.9 287.8,424.2 327.2,218.1 366.3,287.5 405.4,491.3 444.4,561.6 561.8,354.6 600.7,218.1 639.4,424.0 717.5,492.4 757.7,424.3 796.6,287.1 835.3,424.3 873.9,492.6 1030.4,218.0 1499.0,353.5" fill="none" stroke="#eea866" stroke-width="1.25" stroke-linejoin="round"/>
<polyline points="181.2,700.0 220.6,837.0 298.5,561.8 337.9,493.2 416.6,768.2 454.0,699.0 571.2,630.2 648.0,767.2 688.0,630.2 727.4,768.2 766.2,630.2 845.6,767.2 1000.6,630.2 1039.0,700.0 1079.0,630.2 1118.0,700.0 1274.6,768.2" fill="none" stroke="#8fcc86" stroke-width="1.25" stroke-linejoin="round"/>
</svg>
<div class="yl" style="top:888.5px">0 W</div>
<div class="yl" style="top:838.3px">50 W</div>
<div class="yl" style="top:788.1px">100 W</div>
<div class="yl" style="top:738.0px">150 W</div>
<div class="yl" style="top:687.8px">200 W</div>
<div class="yl" style="top:637.6px">250 W</div>
<div class="yl" style="top:587.4px">300 W</div>
<div class="yl" style="top:537.2px">350 W</div>
<div class="yl" style="top:487.1px">400 W</div>
<div class="yl" style="top:436.9px">450 W</div>
<div class="yl" style="top:386.7px">500 W</div>
<div class="yl" style="top:336.5px">550 W</div>
<div class="yl" style="top:286.3px">600 W</div>
<div class="yl" style="top:236.2px">650 W</div>
<div class="yl" style="top:186.0px">700 W</div>
<div class="yr" style="top:207.6px">21.8 °C</div>
<div class="yr" style="top:276.4px">21.7 °C</div>
<div class="yr" style="top:345.2px">21.6 °C</div>
<div class="yr" style="top:414.0px">21.5 °C</div>
<div class="yr" style="top:482.8px">21.4 °C</div>
<div class="yr" style="top:551.6px">21.3 °C</div>
<div class="yr" style="top:620.5px">21.2 °C</div>
<div class="yr" style="top:689.3px">21.1 °C</div>
<div class="yr" style="top:758.1px">21 °C</div>
<div class="yr" style="top:826.9px">20.9 °C</div>
<div class="xl" style="left:195.9px">18:00</div>
<div class="xl" style="left:302.4px">18:30</div>
<div class="xl" style="left:408.8px">19:00</div>
<div class="xl" style="left:515.2px">19:30</div>
<div class="xl" style="left:621.7px">20:00</div>
<div class="xl" style="left:728.1px">20:30</div>
<div class="xl" style="left:834.6px">21:00</div>
<div class="xl" style="left:941.0px">21:30</div>
<div class="xl" style="left:1047.5px">22:00</div>
<div class="xl" style="left:1154.0px">22:30</div>
<div class="xl" style="left:1260.4px">23:00</div>
<div class="xl" style="left:1366.9px">23:30</div>
<div class="ld" style="left:106px;background:#F2CC0C"></div>
<div class="lg" style="left:133px">Perfera</div>
<div class="lg" style="left:197px">Mean: 122 W</div>
<div class="ld" style="left:303px;background:#5794F2"></div>
<div class="lg" style="left:330px">Gaia</div>
<div class="lg" style="left:373px">Mean: 43.3 W</div>
<div class="ld" style="left:1050px;background:#FF9830"></div>
<div class="lg" style="left:1077px">Xiaomi Inside</div>
<div class="lg" style="left:1184px">Mean: 21.6 °C</div>
<div class="ld" style="left:1298px;background:#73BF69"></div>
<div class="lg" style="left:1325px">Xiaomi Bedroom</div>
<div class="lg" style="left:1454px">Mean: 21.1 °C</div>
</body></html>
